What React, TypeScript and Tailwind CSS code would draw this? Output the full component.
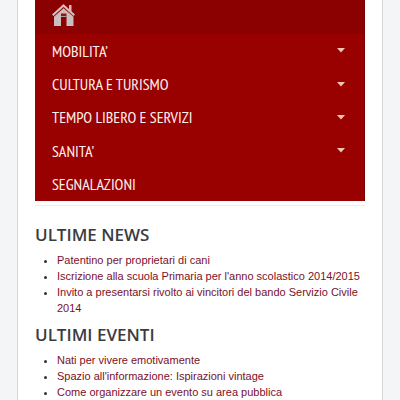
type MenuItem = { label: string; hasChildren: boolean };

const menu: MenuItem[] = [
  { label: "MOBILITA’", hasChildren: true },
  { label: "CULTURA E TURISMO", hasChildren: true },
  { label: "TEMPO LIBERO E SERVIZI", hasChildren: true },
  { label: "SANITA’", hasChildren: true },
  { label: "SEGNALAZIONI", hasChildren: false },
];

const news = [
  "Patentino per proprietari di cani",
  "Iscrizione alla scuola Primaria per l'anno scolastico 2014/2015",
  "Invito a presentarsi rivolto ai vincitori del bando Servizio Civile 2014",
];

const events = [
  "Nati per vivere emotivamente",
  "Spazio all'informazione: Ispirazioni vintage",
  "Come organizzare un evento su area pubblica",
];

const HomeIcon = () => (
  <svg width="24" height="24" viewBox="0 0 24 24" aria-hidden="true">
    <path
      d="M11.5 0 0 10.5l1.5 1.6L11.5 3l10 9.1 1.5-1.6-3.5-3.2V1H17v4z"
      fill="#d9baba"
    />
    <path d="M11.5 4.2 2 12.8V22h7v-9h5.500v9h7v-9.200z" fill="#cbbebe" />
    <path d="M9 9.500h5.500V13H9z" fill="#8b1a1a" />
    <path d="M9 12h5.500v1H9z" fill="#b79a9a" />
  </svg>
);

const Section = ({ title, items }: { title: string; items: string[] }) => (
  <section>
    <h2 className="font-['Open_Sans',sans-serif] text-[17px] leading-[26px] font-semibold text-[#3a3d3f]">
      {title}
    </h2>
    <ul className="list-disc pt-1 pb-1.5 pl-[22px] text-[11px] leading-4 text-[#333]">
      {items.map((item) => (
        <li key={item}>
          <a href="#" className="text-[#7b1028] hover:underline">
            {item}
          </a>
        </li>
      ))}
    </ul>
  </section>
);

const App = () => {
  return (
    <div className="min-h-screen bg-[#f3f5f7] px-[17px] font-['Liberation_Sans',Arial,sans-serif]">
      <main className="min-h-screen border-x border-[#d5d7d9] bg-white px-[17px]">
        <nav className="border-r border-[#7a0000] bg-[#990000]">
          <a
            href="#"
            aria-label="Home"
            className="flex h-[34px] items-end bg-[#8b0000] pb-1.5 pl-[17px]"
          >
            <HomeIcon />
          </a>
          <ul className="grid h-[167px] grid-rows-5">
            {menu.map(({ label, hasChildren }) => (
              <li key={label}>
                <a
                  href="#"
                  className="flex h-full items-center justify-between pl-[17px] pr-[19px] font-['PT_Sans_Narrow','Open_Sans_Condensed','Roboto_Condensed',Lato,sans-serif] text-base text-[#fff2ee]"
                >
                  {label}
                  {hasChildren && (
                    <svg width="8" height="5" viewBox="0 0 8 5" aria-hidden="true">
                      <path d="M0 0h8L4 4.500z" fill="#f2c4b8" />
                    </svg>
                  )}
                </a>
              </li>
            ))}
          </ul>
        </nav>
        <div className="mt-1 border-t border-[#eeeeee] pt-4">
          <Section title="ULTIME NEWS" items={news} />
          <Section title="ULTIMI EVENTI" items={events} />
        </div>
      </main>
    </div>
  );
};

export default App;
